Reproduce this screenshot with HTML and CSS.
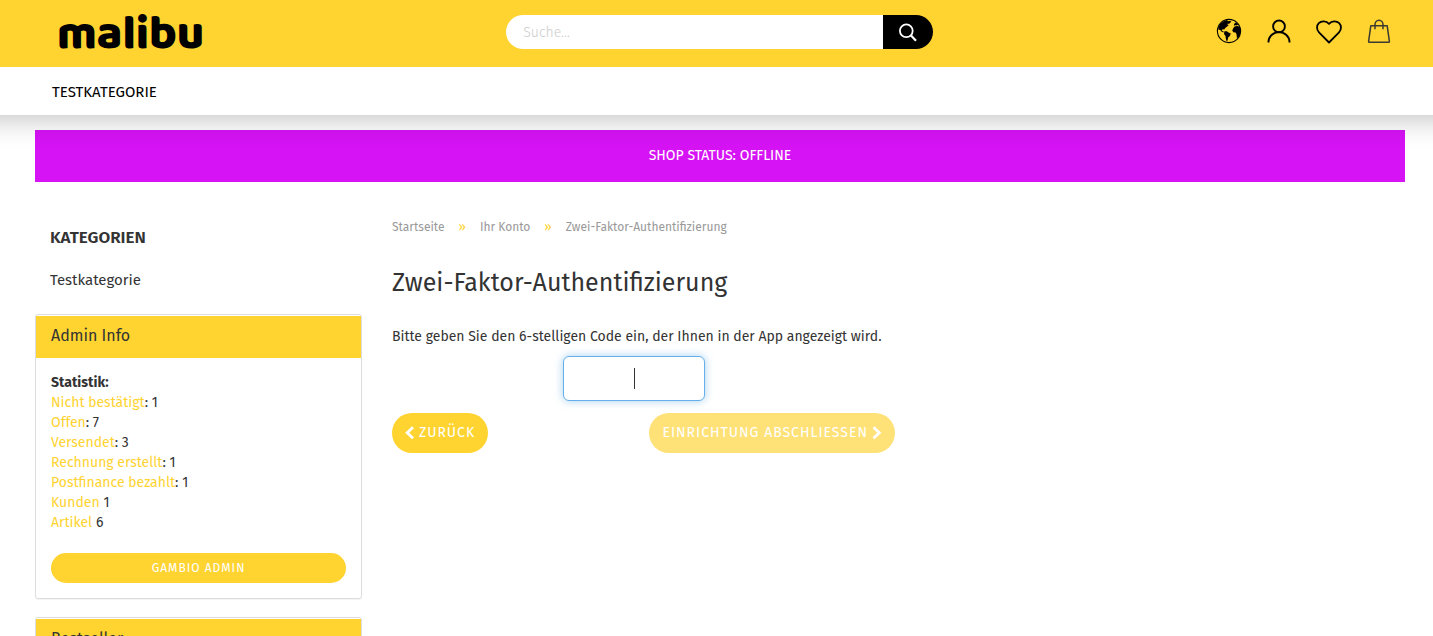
FILE: index.html
```html
<!DOCTYPE html>
<html lang="de">
<head>
<meta charset="utf-8">
<meta name="viewport" content="width=device-width, initial-scale=1">
<title>Zwei-Faktor-Authentifizierung</title>
<link rel="stylesheet" href="styles.css">
</head>
<body>
<header class="header">
  <div class="topbar">
    <a class="logo" href="#">malibu</a>
    <form class="search">
      <input class="search-input" type="text" placeholder="Suche..." aria-label="Suche">
      <button class="search-button" type="button" aria-label="Suchen">
        <svg width="20" height="20" viewBox="0 0 20 20" fill="none" stroke="#fff" stroke-width="1.8"><circle cx="8.3" cy="8.8" r="6.4"/><path d="M12.8 13.3 18 18.8" stroke-width="2.2"/></svg>
      </button>
    </form>
    <nav class="tools" aria-label="Konto">
      <a class="tool" href="#" aria-label="Sprache">
        <svg width="26" height="26" viewBox="0 0 26 26"><circle cx="13" cy="13" r="11.6" fill="none" stroke="#000" stroke-width="1.1"/><path d="M2.2 9.8 4.2 5.8 8 3l3-1 1 1.3 2.2-.6 1.2 1.4-1.5.6-.8 1.2-1.4-.4-.2 1.2 1.3.3-2 1.7-1.6 1.2-1 1.6-1.7-.2-.8 1.5 1.7.4.3 1.2-2-.7-1.8-1.9L2.7 12zM8.4 13.2l2.5.1 1.6 1.2 2.3.9-.9 2.5-1.6 1.3-.8 3.2-.8 1-.9-2.6-.3-2.8-1.5-2.1zM17.5 9.8l1.5-1.6 2.8-.3 2.3 1.2.6 3.9-.8 3.7-2 3.2-1.1-.4-.2-3-1-2-2.2-.2-1.2-1.8zM17.8 6.9l1-1.8 1.3-.6 2.1 2.3-1.5.8-1-.7-.9.8z"/></svg>
      </a>
      <a class="tool" href="#" aria-label="Konto">
        <svg width="26" height="26" viewBox="0 0 26 26" fill="none" stroke="#000" stroke-width="1.9"><circle cx="13" cy="8.4" r="5.9"/><path d="M2.5 24.6V24a10.4 9.8 0 0 1 21 0v.6"/></svg>
      </a>
      <a class="tool" href="#" aria-label="Merkzettel">
        <svg width="26" height="26" viewBox="0 0 26 26" fill="none" stroke="#000" stroke-width="1.8" stroke-linejoin="round"><path d="M13 24.5 3 14.3C.3 11.5.5 7.5 2.8 5.2 5.4 2.6 10.2 2.7 13 5.8c2.8-3.1 7.6-3.2 10.2-.6C25.5 7.5 25.7 11.5 23 14.3z"/></svg>
      </a>
      <a class="tool" href="#" aria-label="Warenkorb">
        <svg width="26" height="26" viewBox="0 0 26 26" fill="none" stroke="#3c3a30" stroke-width="1.5" stroke-linejoin="round"><path d="M4.8 7.8h16.4l2.2 15.5a.8.8 0 0 1-.8.9H3.4a.8.8 0 0 1-.8-.9z"/><path d="M9 11.2V6.6a4 4.4 0 0 1 8 0v4.6"/></svg>
      </a>
    </nav>
  </div>
  <nav class="mainnav"><a href="#">TESTKATEGORIE</a></nav>
</header>
<div class="page">
  <div class="status">SHOP STATUS: OFFLINE</div>
  <div class="columns">
    <aside class="sidebar">
      <nav class="categories">
        <h2>KATEGORIEN</h2>
        <a href="#">Testkategorie</a>
      </nav>
      <section class="panel">
        <h3 class="panel-title">Admin Info</h3>
        <div class="panel-body">
          <strong>Statistik:</strong>
          <ul class="stats">
            <li><a href="#">Nicht bestätigt</a>: 1</li>
            <li><a href="#">Offen</a>: 7</li>
            <li><a href="#">Versendet</a>: 3</li>
            <li><a href="#">Rechnung erstellt</a>: 1</li>
            <li><a href="#">Postfinance bezahlt</a>: 1</li>
            <li><a href="#">Kunden</a> 1</li>
            <li><a href="#">Artikel</a> 6</li>
          </ul>
          <a class="button button-small" href="#">GAMBIO ADMIN</a>
        </div>
      </section>
      <section class="panel">
        <h3 class="panel-title">Bestseller</h3>
      </section>
    </aside>
    <main class="content">
      <nav class="breadcrumb" aria-label="Breadcrumb">
        <a href="#">Startseite</a><span>»</span><a href="#">Ihr Konto</a><span>»</span><a href="#">Zwei-Faktor-Authentifizierung</a>
      </nav>
      <h1>Zwei-Faktor-Authentifizierung</h1>
      <form class="auth">
        <label for="code">Bitte geben Sie den 6-stelligen Code ein, der Ihnen in der App angezeigt wird.</label>
        <div class="code-row"><div class="code-box"><input id="code" class="code" type="text" maxlength="6"><i class="caret"></i></div></div>
        <div class="actions">
          <a class="button" href="#"><svg width="10" height="14" viewBox="0 0 10 14" fill="none" stroke="#fff" stroke-width="2.8"><path d="M8 1.2 2.2 6.7 8 12.2"/></svg>ZURÜCK</a>
          <button class="button" type="submit" disabled>EINRICHTUNG ABSCHLIESSEN<svg width="10" height="14" viewBox="0 0 10 14" fill="none" stroke="#fff" stroke-width="2.8"><path d="M1.5 1.2 7.3 6.7 1.5 12.2"/></svg></button>
        </div>
      </form>
    </main>
  </div>
</div>
</body>
</html>
```
FILE: styles.css
```css
* { box-sizing: border-box; }
body {
  margin: 0;
  overflow: hidden;
  background: #fff;
  color: #333;
  font: 14px/20px "Fira Sans", "Noto Sans", sans-serif;
}
a { color: inherit; text-decoration: none; }
h1, h2, h3, ul { margin: 0; padding: 0; font-weight: 400; }
svg { display: block; flex: none; }

.header { position: relative; z-index: 1; background: #fff; }
.header::before {
  content: "";
  position: absolute;
  inset: 0 -40px;
  z-index: -1;
  box-shadow: 0 0 30px rgba(0, 0, 0, .3);
}
.topbar {
  display: grid;
  grid-template-columns: repeat(3, 1fr);
  height: 67px;
  padding: 0 29px 0 35px;
  background: #ffd330;
}
.logo {
  padding-left: 22px;
  color: #000;
  font: 800 47px/70px "Baloo 2", "DejaVu Sans", sans-serif;
}
.search { display: flex; height: 34px; margin: 15px 15px 0; }
.search-input {
  flex: 1;
  min-width: 0;
  padding: 1px 17px 0;
  border: 0;
  border-radius: 17px 0 0 17px;
  background: #fff;
  font: 300 14px/20px "Fira Sans", "Open Sans", sans-serif;
}
.search-input::placeholder { color: #ccc; }
.search-button {
  display: grid;
  place-items: center;
  width: 50px;
  padding: 0;
  border: 0;
  border-radius: 0 17px 17px 0;
  background: #000;
}
.tools { display: flex; justify-content: flex-end; }
.tool { display: grid; place-items: center; width: 50px; height: 62px; }
.mainnav { height: 48px; padding: 0 52px; background: #fff; color: #000; font-size: 15px; line-height: 50px; }

.page { padding: 15px 28px 0 35px; }
.status {
  height: 52px;
  background: #d613f5;
  color: #fff;
  font-size: 14px;
  line-height: 51px;
  text-align: center;
}
.columns { display: grid; grid-template-columns: 1fr 3fr; padding-right: 2px; }
.sidebar { padding-right: 15px; }
.categories { padding: 46px 15px 24px; font-size: 15px; }
.categories h2 { margin-bottom: 22px; font-size: 17px; font-weight: 600; }
.panel {
  margin-bottom: 18px;
  padding-top: 1px;
  border: 1px solid #ddd;
  border-radius: 3px;
  box-shadow: 0 1px 1px rgba(0, 0, 0, .05);
}
.panel-title { height: 42px; padding: 0 15px; background: #ffd330; font-size: 16px; line-height: 39px; }
.panel-body { padding: 15px; }
.stats { margin-bottom: 20px; list-style: none; }
.stats a { color: #ffd330; }

.button {
  display: inline-flex;
  align-items: center;
  justify-content: center;
  gap: 4px;
  height: 40px;
  padding: 0 13px;
  border: 0;
  border-radius: 20px;
  background: #ffd330;
  color: #fff;
  font: 14px/20px "Fira Sans", "Noto Sans", sans-serif;
  letter-spacing: 1px;
}
.button:disabled { opacity: .65; }
.button-small { display: flex; height: 30px; font-size: 12px; }

.content { padding: 35px 15px 0; }
.breadcrumb { display: flex; gap: 14px; color: #999; font-size: 12px; }
.breadcrumb span { color: #ffd330; font-size: 13px; }
h1 { margin: 28px 0 25px; font-size: 25px; line-height: 36px; }
.auth { max-width: 503px; }
.auth label { display: block; margin-bottom: 8px; line-height: 22px; white-space: nowrap; }
.code-row { display: flex; justify-content: center; padding-right: 19px; }
.code-box { position: relative; width: 142px; height: 45px; }
.code {
  width: 100%;
  height: 100%;
  border: 1px solid #66afe9;
  border-radius: 6px;
  outline: 0;
  box-shadow: 0 0 8px rgba(102, 175, 233, .6);
  font-size: 18px;
  text-align: center;
}
.caret { position: absolute; top: 12px; left: 71px; width: 1px; height: 21px; background: #333; }
.actions { display: flex; justify-content: space-between; margin-top: 12px; }
```
